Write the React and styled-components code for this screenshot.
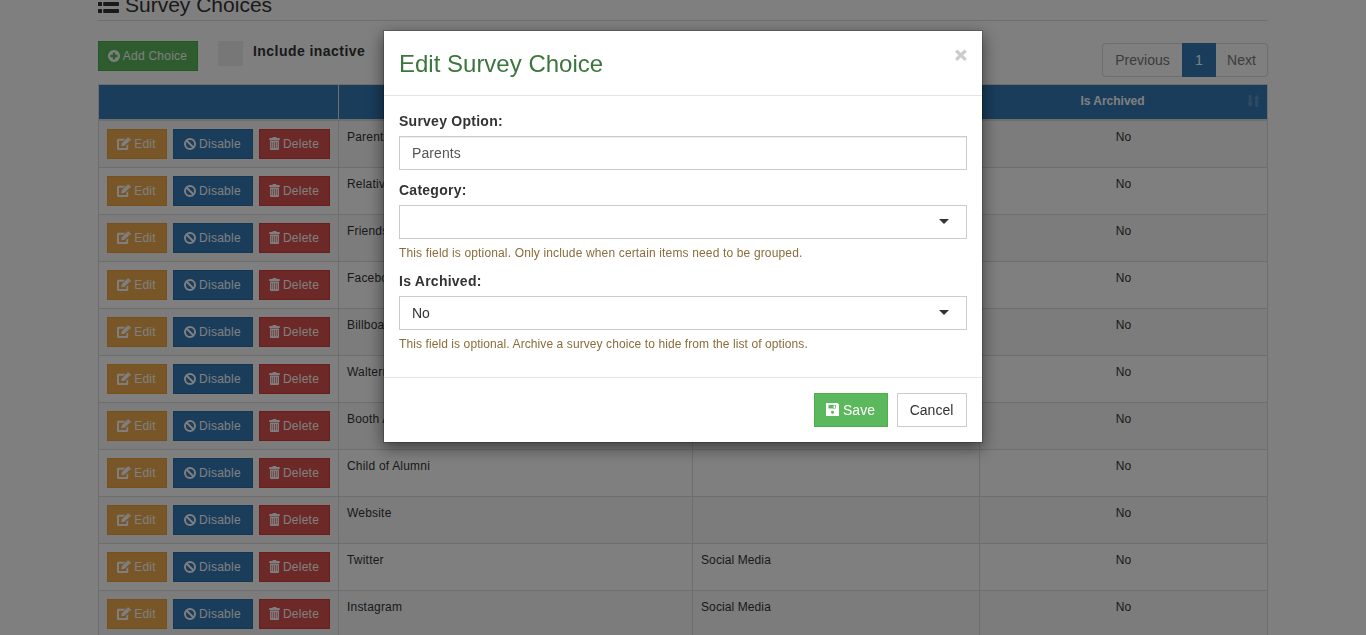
import React from "react";
import styled, { createGlobalStyle } from "styled-components";

const choices = [
  { name: "Parents", category: "" },
  { name: "Relatives", category: "" },
  { name: "Friends", category: "" },
  { name: "Facebook", category: "" },
  { name: "Billboard", category: "" },
  { name: "Walternate", category: "" },
  { name: "Booth Ad", category: "" },
  { name: "Child of Alumni", category: "" },
  { name: "Website", category: "" },
  { name: "Twitter", category: "Social Media" },
  { name: "Instagram", category: "Social Media" },
];

const Icon = ({ children, w = 12, h = 12 }) => (
  <IconStyle
    width={w}
    height={h}
    viewBox={`0 0 ${w} ${h}`}
    fill="currentColor"
  >
    {children}
  </IconStyle>
);

const ListIcon = () => (
  <Icon w={21} h={18}>
    {[0, 7, 14].map((y) => (
      <React.Fragment key={y}>
        <rect x="0" y={y} width="4" height="4" rx="0.6" />
        <rect x="5.2" y={y} width="15.8" height="4" rx="0.8" />
      </React.Fragment>
    ))}
  </Icon>
);

const PlusIcon = () => (
  <Icon>
    <path
      fillRule="evenodd"
      d="M6 0a6 6 0 1 1 0 12A6 6 0 0 1 6 0zM4.8 2.4v2.4H2.4v2.4h2.4v2.4h2.4V7.2h2.4V4.800H7.2V2.4z"
    />
  </Icon>
);

const EditIcon = () => (
  <Icon w={14} h={14}>
    <path d="M1.200 1.800h7L6.300 3.700H2v7.300h7.300V9l1.900-1.900v4.700q0 1.200-1.200 1.200H1.200Q0 13 0 11.800V3q0-1.200 1.200-1.200z" />
    <path d="M4.200 9.200 4.800 6.200 9.800 1.300 12.500 4 7.400 8.800zM10.300.8q.8-.8 1.500-.1l1.700 1.600q.7.7 0 1.400l-.5.5L9.900 1.100z" />
  </Icon>
);

const BanIcon = () => (
  <Icon>
    <circle
      cx="6"
      cy="6"
      r="5"
      fill="none"
      stroke="currentColor"
      strokeWidth="2"
    />
    <path d="M2.500 2.500 9.500 9.500" stroke="currentColor" strokeWidth="2" />
  </Icon>
);

const TrashIcon = () => (
  <Icon w={11} h={14}>
    <path d="M3.500.8Q3.500 0 4.300 0h2.400q.8 0 .8.8V1h2.700q.6 0 .6.6V3H.2V1.600Q.2 1 .8 1h2.700z" />
    <path
      fillRule="evenodd"
      d="M1 3.600h9V12q0 1-1 1H2q-1 0-1-1zM2.500 5v6.300h.6V5zM4.300 5v6.300h.6V5zM6.100 5v6.300h.6V5zM7.900 5v6.300h.6V5z"
    />
  </Icon>
);

const SaveIcon = () => (
  <Icon w={13} h={14}>
    <path
      fillRule="evenodd"
      d="M.6 0h10.900L13 1.500v10.900q0 .6-.6.6H.6q-.6 0-.6-.6V.6Q0 0 .6 0zM2.500 2v3.600h7.500V2zM6.500 7.700a1.600 1.600 0 1 0 .01 0z"
    />
    <path d="M7.500 2.500h1.700v2.500H7.500z" />
  </Icon>
);

const SortIcon = () => (
  <Icon w={13} h={12}>
    <path d="M1.700 0h3v8.200h1.600L3.200 12 0 8.200h1.700zM8.200 12h3V3.800h1.700L9.700 0 6.600 3.800h1.600z" />
  </Icon>
);

function SurveyTable() {
  return (
    <Table>
      <thead>
        <tr>
          <HeadCell $width={240} />
          <HeadCell $width={354}>Survey Option</HeadCell>
          <HeadCell $width={287}>Category</HeadCell>
          <HeadCell $width={288}>
            Is Archived
            <Sort>
              <SortIcon />
            </Sort>
          </HeadCell>
        </tr>
      </thead>
      <tbody>
        {choices.map((choice) => (
          <Row key={choice.name}>
            <Cell>
              <Actions>
                <Button $kind="warning" $width={60}>
                  <EditIcon />
                  Edit
                </Button>
                <Button $kind="primary" $width={80}>
                  <BanIcon />
                  Disable
                </Button>
                <Button $kind="danger" $width={71}>
                  <TrashIcon />
                  Delete
                </Button>
              </Actions>
            </Cell>
            <Cell>{choice.name}</Cell>
            <Cell $spacing={0.1}>{choice.category}</Cell>
            <Cell $center>No</Cell>
          </Row>
        ))}
      </tbody>
    </Table>
  );
}

function EditModal() {
  return (
    <Modal>
      <ModalHeader>
        <ModalTitle>Edit Survey Choice</ModalTitle>
        <Close>×</Close>
      </ModalHeader>
      <ModalBody>
        <Label>Survey Option:</Label>
        <Input defaultValue="Parents" />
        <Label>Category:</Label>
        <Select>
          <Caret />
        </Select>
        <Help $spacing={0.15}>
          This field is optional. Only include when certain items need to be
          grouped.
        </Help>
        <Label>Is Archived:</Label>
        <Select>
          No
          <Caret />
        </Select>
        <Help $spacing={0.09}>
          This field is optional. Archive a survey choice to hide from the list
          of options.
        </Help>
      </ModalBody>
      <ModalFooter>
        <Button $kind="success" $large $width={74}>
          <SaveIcon />
          Save
        </Button>
        <Button $kind="plain" $large $width={70}>
          Cancel
        </Button>
      </ModalFooter>
    </Modal>
  );
}

export default function App() {
  return (
    <>
      <GlobalStyle />
      <Page>
        <Title>
          <ListIcon />
          Survey Choices
        </Title>
        <Toolbar>
          <Button $kind="success" $width={100}>
            <PlusIcon />
            Add Choice
          </Button>
          <Checkbox />
          <CheckLabel>Include inactive</CheckLabel>
          <Pagination>
            <PageLink $width={80}>Previous</PageLink>
            <PageLink $width={34} $active>
              1
            </PageLink>
            <PageLink $width={52}>Next</PageLink>
          </Pagination>
        </Toolbar>
        <SurveyTable />
      </Page>
      <Backdrop>
        <EditModal />
      </Backdrop>
    </>
  );
}

const kinds = {
  success: ["#5cb85c", "#4cae4c", "#fff"],
  warning: ["#f0ad4e", "#eea236", "#fff"],
  primary: ["#337ab7", "#2e6da4", "#fff"],
  danger: ["#d9534f", "#d43f3a", "#fff"],
  plain: ["#fff", "#ccc", "#333"],
};

const GlobalStyle = createGlobalStyle`
  * {
    box-sizing: border-box;
  }
  body {
    margin: 0;
    height: 635px;
    overflow: hidden;
    background: #fff;
    color: #333;
    font: 14px/20px "Liberation Sans", Arial, sans-serif;
  }
`;

const IconStyle = styled.svg`
  display: block;
  flex: none;
`;

const Page = styled.div`
  width: 1170px;
  height: 635px;
  margin: 0 98px;
  overflow: hidden;
`;

const Title = styled.div`
  display: flex;
  align-items: flex-end;
  gap: 6px;
  height: 21px;
  padding-bottom: 7px;
  border-bottom: 1px solid #ddd;
  font-size: 21px;
  line-height: 16px;
`;

const Toolbar = styled.div`
  display: flex;
  align-items: flex-start;
  height: 63px;
  padding-top: 20px;
`;

const Button = styled.button`
  display: flex;
  align-items: center;
  justify-content: center;
  gap: ${(p) => (p.$large ? 4 : 3)}px;
  width: ${(p) => p.$width}px;
  height: ${(p) => (p.$large ? 34 : 30)}px;
  padding: 0 1px 0 0;
  background: ${(p) => kinds[p.$kind][0]};
  border: 1px solid ${(p) => kinds[p.$kind][1]};
  color: ${(p) => kinds[p.$kind][2]};
  font-family: inherit;
  font-size: ${(p) => (p.$large ? 14 : 12)}px;
  line-height: ${(p) => (p.$large ? 20 : 18)}px;
  letter-spacing: ${(p) => (p.$large ? 0 : 0.25)}px;
  white-space: nowrap;
`;

const Checkbox = styled.div`
  width: 25px;
  height: 25px;
  margin-left: 20px;
  background: #eee;
`;

const CheckLabel = styled.label`
  margin-left: 10px;
  font-weight: bold;
  letter-spacing: 0.45px;
`;

const Pagination = styled.div`
  display: flex;
  margin: 2px 0 0 auto;
`;

const PageLink = styled.div`
  width: ${(p) => p.$width}px;
  height: 34px;
  padding: 6px 0;
  background: ${(p) => (p.$active ? "#337ab7" : "#fff")};
  border: 1px solid ${(p) => (p.$active ? "#337ab7" : "#ddd")};
  color: ${(p) => (p.$active ? "#fff" : "#777")};
  text-align: center;
  &:first-child {
    border-right: 0;
    border-radius: 4px 0 0 4px;
  }
  &:last-child {
    border-left: 0;
    border-radius: 0 4px 4px 0;
  }
`;

const Table = styled.table`
  width: 1170px;
  table-layout: fixed;
  border-collapse: separate;
  border-spacing: 0;
  border: 1px solid #ddd;
  border-right: 0;
  font-size: 12px;
  line-height: 17px;
`;

const HeadCell = styled.th`
  position: relative;
  width: ${(p) => p.$width}px;
  height: 36px;
  padding: 0 22px 2px 0;
  background: #337ab7;
  background-clip: padding-box;
  border-right: 1px solid #ddd;
  border-bottom: 2px solid #ddd;
  color: #fff;
`;

const Sort = styled.span`
  position: absolute;
  right: 7px;
  top: 10px;
  opacity: 0.2;
`;

const Row = styled.tr`
  height: 47px;
  &:nth-child(odd) {
    background: #f9f9f9;
  }
`;

const Cell = styled.td`
  height: 47px;
  padding: 8px;
  vertical-align: top;
  text-align: ${(p) => (p.$center ? "center" : "left")};
  letter-spacing: ${(p) => p.$spacing || 0.2}px;
  border-right: 1px solid #ddd;
  border-bottom: 1px solid #ddd;
`;

const Actions = styled.div`
  display: flex;
  gap: 6px;
`;

const Backdrop = styled.div`
  position: fixed;
  inset: 0;
  display: flex;
  align-items: flex-start;
  justify-content: center;
  padding-top: 30px;
  background: rgba(0, 0, 0, 0.5);
`;

const Modal = styled.div`
  width: 600px;
  background: #fff;
  background-clip: padding-box;
  border: 1px solid rgba(0, 0, 0, 0.2);
  box-shadow: 0 5px 15px rgba(0, 0, 0, 0.5);
`;

const ModalHeader = styled.div`
  display: flex;
  justify-content: space-between;
  height: 65px;
  padding: 15px;
  border-bottom: 1px solid #e5e5e5;
`;

const ModalTitle = styled.div`
  color: #3c763d;
  font-size: 24px;
  line-height: 36px;
`;

const Close = styled.div`
  color: #000;
  font-size: 21px;
  font-weight: bold;
  line-height: 18px;
  opacity: 0.2;
  -webkit-text-stroke: 1px #000;
`;

const ModalBody = styled.div`
  height: 281px;
  padding: 15px;
`;

const Label = styled.label`
  display: block;
  margin-bottom: 5px;
  font-weight: bold;
  letter-spacing: 0.25px;
`;

const Input = styled.input`
  display: block;
  width: 100%;
  height: 34px;
  margin-bottom: 10px;
  padding: 6px 12px;
  border: 1px solid #ccc;
  box-shadow: inset 0 1px 1px rgba(0, 0, 0, 0.075);
  color: #555;
  font: inherit;
  letter-spacing: 0.1px;
`;

const Select = styled.div`
  display: flex;
  align-items: center;
  height: 34px;
  padding: 0 17px 0 12px;
  border: 1px solid #ccc;
`;

const Caret = styled.span`
  margin: -2px 0 0 auto;
  border: 5px solid transparent;
  border-top-color: #333;
  border-bottom: 0;
`;

const Help = styled.div`
  margin: 5px 0 9px;
  color: #8a6d3b;
  font-size: 12px;
  line-height: 18px;
  letter-spacing: ${(p) => p.$spacing}px;
`;

const ModalFooter = styled.div`
  display: flex;
  justify-content: flex-end;
  gap: 9px;
  padding: 15px;
  border-top: 1px solid #e5e5e5;
`;
